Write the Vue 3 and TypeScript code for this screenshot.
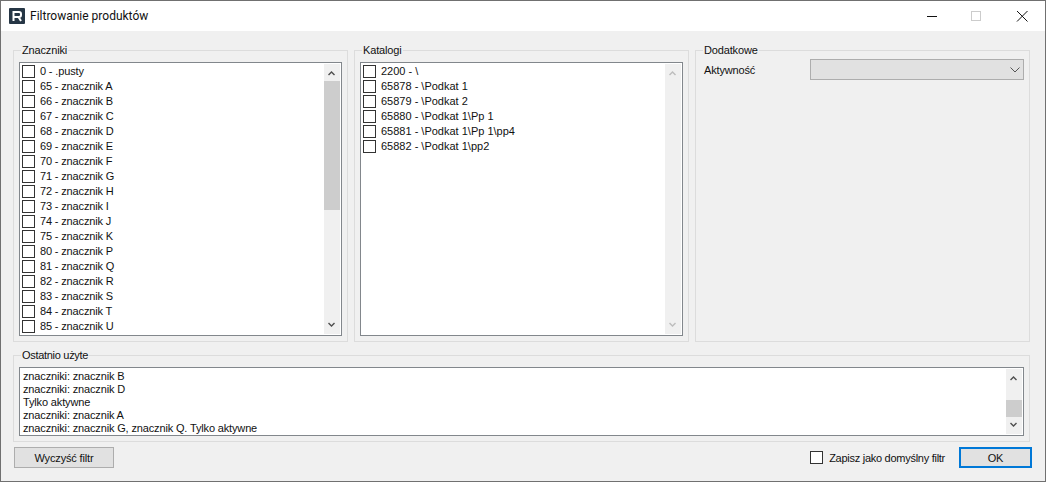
<template>
  <div class="window">
    <header class="titlebar">
      <svg class="logo" width="16" height="16" viewBox="0 0 16 16">
        <rect width="16" height="16" rx="1" fill="#263645" />
        <path d="M4.500 13V4h5.500q2 0 2 2v1q0 2-2 2H5.500M9.500 9l2.500 4" fill="none" stroke="#fff" stroke-width="2" />
      </svg>
      <span class="title">Filtrowanie produktów</span>
      <div class="controls">
        <svg width="46" height="30" viewBox="0 0 46 30"><path d="M20 15.500h10" stroke="#111" fill="none" /></svg>
        <svg width="46" height="30" viewBox="0 0 46 30"><rect x="18.500" y="10.500" width="9" height="9" stroke="#ccc" fill="none" /></svg>
        <svg width="46" height="30" viewBox="0 0 46 30"><path d="M18 10l10.500 10.500M28.500 10L18 20.500" stroke="#111" fill="none" /></svg>
      </div>
    </header>

    <main class="body">
      <div class="columns">
        <fieldset class="group">
          <legend>Znaczniki</legend>
          <div class="listbox tall">
            <ul class="items">
              <li v-for="item in tags" :key="item"><span class="check"></span>{{ item }}</li>
            </ul>
            <div class="scrollbar">
              <svg class="arrow" width="16" height="17" viewBox="0 0 16 17"><path :d="arrowUp" /></svg>
              <div class="track"><div class="thumb tags-thumb"></div></div>
              <svg class="arrow" width="16" height="17" viewBox="0 0 16 17"><path :d="arrowDown" /></svg>
            </div>
          </div>
        </fieldset>

        <fieldset class="group">
          <legend>Katalogi</legend>
          <div class="listbox tall">
            <ul class="items catalogs">
              <li v-for="item in catalogs" :key="item"><span class="check"></span>{{ item }}</li>
            </ul>
            <div class="scrollbar disabled">
              <svg class="arrow" width="16" height="17" viewBox="0 0 16 17"><path :d="arrowUp" /></svg>
              <div class="track"></div>
              <svg class="arrow" width="16" height="17" viewBox="0 0 16 17"><path :d="arrowDown" /></svg>
            </div>
          </div>
        </fieldset>

        <fieldset class="group">
          <legend>Dodatkowe</legend>
          <div class="field">
            <label>Aktywność</label>
            <div class="select">
              <svg width="10" height="6" viewBox="0 0 10 6"><path d="M.5.500L5 5 9.500.500" fill="none" stroke="#555" /></svg>
            </div>
          </div>
        </fieldset>
      </div>

      <fieldset class="group recent">
        <legend>Ostatnio użyte</legend>
        <div class="listbox short">
          <ul class="lines">
            <li v-for="line in recent" :key="line">{{ line }}</li>
          </ul>
          <div class="scrollbar">
            <svg class="arrow" width="16" height="17" viewBox="0 0 16 17"><path :d="arrowUp" /></svg>
            <div class="track"><div class="thumb recent-thumb"></div></div>
            <svg class="arrow" width="16" height="17" viewBox="0 0 16 17"><path :d="arrowDown" /></svg>
          </div>
        </div>
      </fieldset>

      <footer class="actions">
        <button class="btn clear">Wyczyść filtr</button>
        <span class="save"><span class="check"></span>Zapisz jako domyślny filtr</span>
        <button class="btn ok">OK</button>
      </footer>
    </main>
  </div>
</template>

<script setup lang="ts">
const arrowUp = 'M4 10.500L7.500 7l3.500 3.500-1 1-2.500-2.500-2.500 2.500z'
const arrowDown = 'M4 6.500L7.500 10 11 6.500l-1-1L7.500 8 5 5.500z'

const tags: string[] = [
  '0 - .pusty',
  '65 - znacznik A',
  '66 - znacznik B',
  '67 - znacznik C',
  '68 - znacznik D',
  '69 - znacznik E',
  '70 - znacznik F',
  '71 - znacznik G',
  '72 - znacznik H',
  '73 - znacznik I',
  '74 - znacznik J',
  '75 - znacznik K',
  '80 - znacznik P',
  '81 - znacznik Q',
  '82 - znacznik R',
  '83 - znacznik S',
  '84 - znacznik T',
  '85 - znacznik U',
]

const catalogs: string[] = [
  '2200 - \\',
  '65878 - \\Podkat 1',
  '65879 - \\Podkat 2',
  '65880 - \\Podkat 1\\Pp 1',
  '65881 - \\Podkat 1\\Pp 1\\pp4',
  '65882 - \\Podkat 1\\pp2',
]

const recent: string[] = [
  'znaczniki: znacznik B',
  'znaczniki: znacznik D',
  'Tylko aktywne',
  'znaczniki: znacznik A',
  'znaczniki: znacznik G, znacznik Q. Tylko aktywne',
]
</script>

<style>
html,
body {
  margin: 0;
  background: #f0f0f0;
}
</style>

<style scoped>
* {
  box-sizing: border-box;
}

.window {
  width: 1046px;
  height: 482px;
  border: 1px solid #707070;
  background: #f0f0f0;
  color: #111;
  font-family: 'Liberation Sans', Arial, sans-serif;
  font-size: 11px;
  letter-spacing: -0.15px;
  overflow: hidden;
}

.titlebar {
  height: 30px;
  background: #fff;
  display: flex;
  align-items: center;
  padding-left: 8px;
}

.logo {
  flex: none;
}

.title {
  margin-left: 5px;
  font-family: Roboto, sans-serif;
  font-size: 12px;
  letter-spacing: 0;
}

.controls {
  margin-left: auto;
  display: flex;
}

.body {
  padding: 12px 15px 0 12px;
}

.columns {
  display: grid;
  grid-template-columns: repeat(3, 335px);
  column-gap: 6px;
}

.group {
  margin: 0;
  min-width: 0;
  border: 1px solid #dcdcdc;
  padding: 0 5px 5px;
}

.group legend {
  margin-left: 2px;
  padding: 0 1px;
  line-height: 15px;
}

.listbox {
  display: flex;
  margin-top: 4px;
  border: 1px solid #82878c;
  background: #fff;
}

.tall {
  height: 274px;
}

.short {
  height: 69px;
}

.items,
.lines {
  flex: 1;
  list-style: none;
  margin: 0;
  padding: 0;
  overflow: hidden;
}

.items {
  padding-top: 2px;
  padding-left: 2px;
}

.items li {
  height: 15px;
  line-height: 12px;
  display: flex;
  align-items: flex-start;
  white-space: nowrap;
}

.catalogs {
  letter-spacing: 0;
}

.check {
  flex: none;
  display: inline-block;
  width: 13px;
  height: 13px;
  margin-right: 5px;
  border: 1px solid #333;
  background: #fff;
}

.lines {
  padding-top: 2px;
  padding-left: 3px;
}

.lines li {
  height: 13px;
  line-height: 13px;
  white-space: nowrap;
}

.scrollbar {
  flex: none;
  width: 16px;
  background: #f0f0f0;
  display: flex;
  flex-direction: column;
  margin: 1px 1px 1px 0;
}

.arrow {
  flex: none;
  fill: #505050;
}

.disabled .arrow {
  fill: #bdbdbd;
}

.track {
  flex: 1;
}

.thumb {
  background: #cdcdcd;
}

.tags-thumb {
  height: 129px;
}

.recent-thumb {
  height: 17px;
  margin-top: 14px;
}

.field {
  display: flex;
  align-items: center;
  justify-content: space-between;
  padding-left: 3px;
  margin-top: 1px;
}

.select {
  width: 214px;
  height: 21px;
  border: 1px solid #adadad;
  background: #e1e1e1;
  display: flex;
  align-items: center;
  justify-content: flex-end;
  padding-right: 3px;
}

.recent {
  margin-top: 6px;
  width: 1017px;
}

.recent legend {
  letter-spacing: -0.3px;
}

.actions {
  display: flex;
  align-items: center;
  margin-top: 5px;
  padding-left: 1px;
}

.btn {
  font: inherit;
  letter-spacing: inherit;
  color: inherit;
  background: #e1e1e1;
  border: 1px solid #adadad;
  padding: 0;
}

.clear {
  width: 100px;
  height: 21px;
}

.save {
  margin-left: auto;
  display: flex;
  align-items: center;
  letter-spacing: -0.27px;
}

.save .check {
  margin-right: 6px;
}

.ok {
  width: 73px;
  height: 21px;
  margin-left: 14px;
  margin-right: -2px;
  border: 2px solid #0078d7;
}
</style>
